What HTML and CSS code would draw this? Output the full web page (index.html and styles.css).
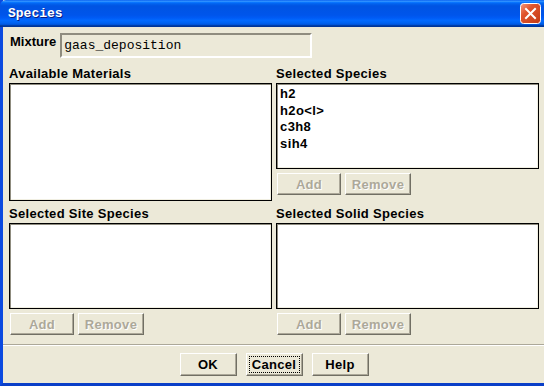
FILE: index.html
```html
<!DOCTYPE html>
<html lang="en">
<head>
    <meta charset="UTF-8">
    <title>Species</title>
    <link rel="stylesheet" href="styles.css">
</head>
<body>
    <div class="window">
        <!-- Title bar -->
        <div class="titlebar">
            <span class="title">Species</span>
            <span class="close">
                <svg width="21" height="21" viewBox="0 0 21 21">
                    <defs>
                        <linearGradient id="red" x1="0" y1="0" x2="1" y2="1">
                            <stop offset="0" stop-color="#f39b80"/>
                            <stop offset="0.35" stop-color="#e0552e"/>
                            <stop offset="1" stop-color="#c33a14"/>
                        </linearGradient>
                    </defs>
                    <rect x="0.5" y="0.5" width="20" height="20" rx="3" fill="url(#red)" stroke="#fff"/>
                    <path d="M6 6 L15 15 M15 6 L6 15" stroke="#fff" stroke-width="2" stroke-linecap="square"/>
                </svg>
            </span>
        </div>

        <!-- Dialog content -->
        <div class="content">
            <div class="mixture">
                <span class="label">Mixture</span>
                <div class="field">gaas_deposition</div>
            </div>

            <div class="panels">
                <div class="panel">
                    <div class="label">Available Materials</div>
                    <div class="list tall"></div>
                </div>
                <div class="panel">
                    <div class="label">Selected Species</div>
                    <div class="list">
                        <div class="item">h2</div>
                        <div class="item">h2o&lt;l&gt;</div>
                        <div class="item">c3h8</div>
                        <div class="item">sih4</div>
                    </div>
                    <div class="buttons">
                        <span class="btn small disabled">Add</span>
                        <span class="btn wide disabled">Remove</span>
                    </div>
                </div>
                <div class="panel">
                    <div class="label">Selected Site Species</div>
                    <div class="list"></div>
                    <div class="buttons">
                        <span class="btn small disabled">Add</span>
                        <span class="btn wide disabled">Remove</span>
                    </div>
                </div>
                <div class="panel">
                    <div class="label">Selected Solid Species</div>
                    <div class="list"></div>
                    <div class="buttons">
                        <span class="btn small disabled">Add</span>
                        <span class="btn wide disabled">Remove</span>
                    </div>
                </div>
            </div>

            <div class="separator"></div>

            <div class="actions">
                <span class="btn action">OK</span>
                <span class="btn action focused">Cancel</span>
                <span class="btn action">Help</span>
            </div>
        </div>
    </div>
</body>
</html>
```

FILE: styles.css
```css
body {
    margin: 0;
    padding: 0;
    width: 544px;
    height: 386px;
    overflow: hidden;
    font-family: "Liberation Sans", Arial, sans-serif;
    font-size: 13px;
    font-weight: bold;
    color: #000;
    background: #ece9d8;
}
.window {
    width: 541px;
    height: 383px;
    border-left: 3px solid #0b4ae0;
    border-bottom: 3px solid #0a3fc8;
    background: #ece9d8;
    display: flex;
    flex-direction: column;
}
.titlebar {
    height: 27px;
    margin-left: -3px;
    padding-left: 8px;
    display: flex;
    align-items: center;
    justify-content: space-between;
    background: linear-gradient(to bottom, #0058ee 0%, #3593ff 4%, #288eff 6%, #127dff 8%, #036ffc 10%, #0262ee 14%, #0057e5 20%, #0054e3 24%, #0055eb 56%, #005bf5 66%, #026afe 76%, #0062ef 86%, #0052d6 92%, #0040ab 94%, #003092 100%);
    border-top-left-radius: 6px;
}
.title {
    font-family: "Liberation Mono", "Courier New", monospace;
    font-size: 13px;
    color: #fff;
    text-shadow: 1px 1px #0a1a80;
    margin-top: -1px;
}
.close {
    width: 21px;
    height: 21px;
    margin-right: 3px;
    margin-top: -1px;
    display: flex;
}
.content {
    flex: 1;
    padding: 6px 5px 0 6px;
    display: flex;
    flex-direction: column;
}
.label {
    height: 15px;
    line-height: 15px;
    letter-spacing: 0.3px;
}
.mixture {
    display: flex;
    align-items: flex-start;
    padding-left: 1px;
}
.mixture .label {
    margin-top: 1px;
    letter-spacing: 0;
}
.field {
    margin-left: 4px;
    width: 246px;
    height: 21px;
    line-height: 21px;
    padding-left: 2px;
    border-top: 2px solid #8f8c7f;
    border-left: 2px solid #8f8c7f;
    border-right: 2px solid #fff;
    border-bottom: 2px solid #fff;
    font-family: "Liberation Mono", "Courier New", monospace;
    font-size: 13px;
    font-weight: normal;
}
.panels {
    margin-top: 8px;
    display: grid;
    grid-template-columns: 263px 263px;
    column-gap: 4px;
    row-gap: 5px;
    align-items: start;
}
.panel {
    display: flex;
    flex-direction: column;
}
.panel .label {
    margin-bottom: 2px;
}
.list {
    height: 80px;
    border: 1px solid #000;
    box-shadow: inset 1px 1px #8f8c7f, inset -1px -1px #f1efe2;
    background: #fff;
    padding: 2px 3px;
}
.list.tall {
    height: 112px;
}
.item {
    height: 16.5px;
    line-height: 16.5px;
    letter-spacing: 0.4px;
}
.buttons {
    display: flex;
    gap: 4px;
    margin-top: 4px;
    margin-left: 1px;
}
.btn {
    position: relative;
    height: 22px;
    box-sizing: border-box;
    display: flex;
    align-items: center;
    justify-content: center;
    border-top: 1px solid #fff;
    border-left: 1px solid #fff;
    border-right: 1px solid #716f64;
    border-bottom: 1px solid #716f64;
    box-shadow: inset -1px -1px #aca899;
    background: #ece9d8;
    letter-spacing: 0.3px;
}
.btn.small {
    width: 64px;
}
.btn.wide {
    width: 66px;
}
.btn.disabled {
    color: #aca899;
    text-shadow: 1px 1px #fff;
}
.separator {
    margin-top: 9px;
    margin-left: -6px;
    margin-right: -5px;
    height: 0;
    border-top: 1px solid #aca899;
    border-bottom: 1px solid #fff;
}
.actions {
    margin-top: 7px;
    display: flex;
    justify-content: center;
    gap: 9px;
}
.btn.action {
    width: 57px;
    height: 23px;
}
.btn.focused::after {
    content: "";
    position: absolute;
    inset: 2px;
    border: 1px dotted #000;
}
```
